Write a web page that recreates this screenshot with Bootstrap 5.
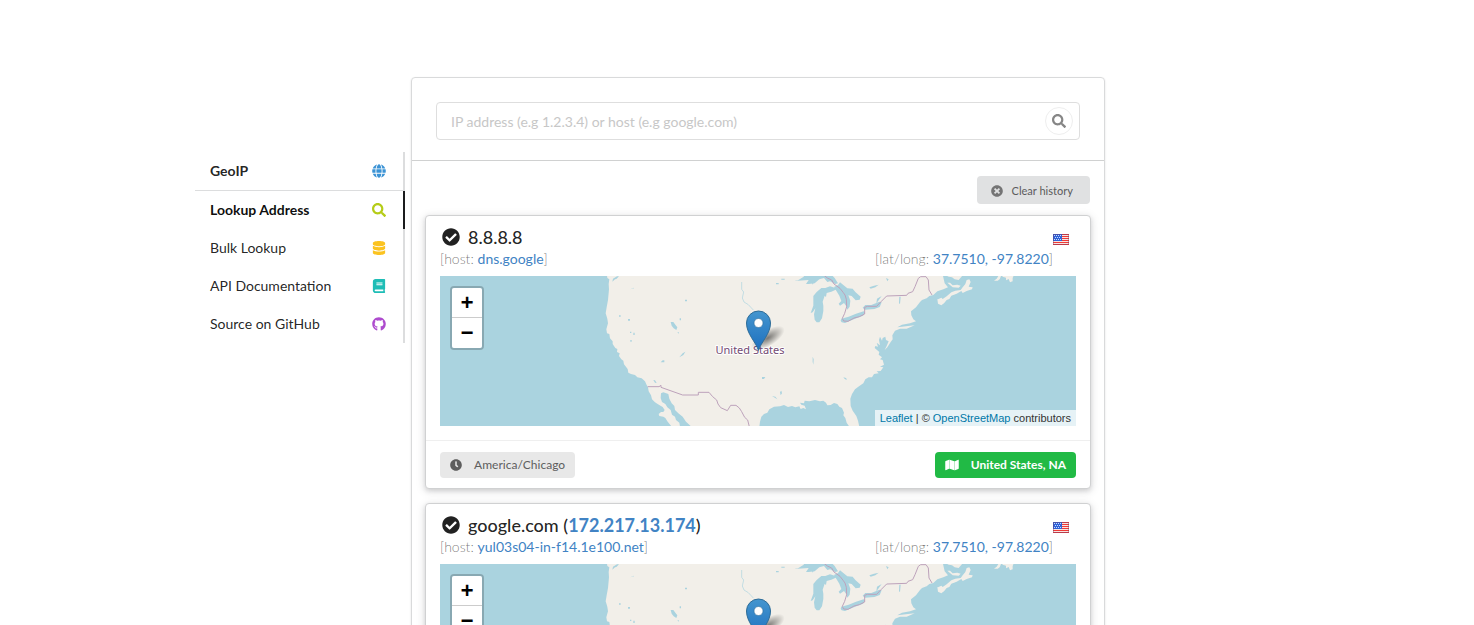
<!DOCTYPE html>
<html lang="en">
<head>
<meta charset="utf-8">
<meta name="viewport" content="width=device-width, initial-scale=1">
<title>GeoIP - Lookup Address</title>
<link href="https://cdn.jsdelivr.net/npm/bootstrap@5.3.0/dist/css/bootstrap.min.css" rel="stylesheet">
<style>
  body { font-family: Lato, "Liberation Sans", sans-serif; font-size: 14px; line-height: 20px; color: rgba(0,0,0,.87); }
  a { color: #4183c4; text-decoration: none; }
  .page { max-width: 1128px; padding: 77px 0 0 22px; gap: 6px; }
  .side { flex: 0 0 210px; margin-top: 75px; }
  .side-item { height: 38px; padding: 0 17px 0 15px; color: rgba(0,0,0,.87); border-right: 2px solid #dcddde; }
  .side-head { height: 39px; border-bottom: 1px solid #dcddde; }
  .side-item.current { border-right-color: #1b1c1d; color: rgba(0,0,0,.95); }
  .ico { width: 14px; height: 14px; fill: currentColor; flex: none; }
  .ico-blue { color: #2185d0; opacity: .88; }
  .ico-olive { color: #b5cc18; }
  .ico-yellow { color: #fbbd08; opacity: .9; }
  .ico-teal { color: #00b5ad; opacity: .88; }
  .ico-purple { color: #a333c8; opacity: .88; }
  .panel { flex: 1 1 0; max-width: 694px; min-width: 0; border: 1px solid #d9dadb; border-radius: 4px; box-shadow: 0 1px 2px rgba(34,36,38,.15); }
  .panel-top { padding: 24px 24px 20px; border-bottom: 1px solid #d0d1d1; }
  .panel-body { padding: 15px 13px 14px; }
  .field { height: 38px; padding: 0 48px 0 14px; font-size: 14px; border: 1px solid #dedede; border-radius: 4px; }
  .field::placeholder { color: #c7c7c7; opacity: 1; }
  .go { width: 28px; height: 28px; right: 7px; top: 5px; padding: 0; border: 1px solid #eee; border-radius: 50%; background: #fff; color: #868686; }
  .clear { height: 28px; margin-right: 1px; padding: 2px 17px 0 14px; gap: 9px; border: 0; border-radius: 4px; background: #e0e1e2; color: rgba(0,0,0,.6); font-size: 11px; font-weight: 500; }
  .clear .ico { width: 12px; height: 12px; opacity: .8; }
  .result { border: 1px solid #d0d1d2; border-radius: 4px; background: #fff; box-shadow: 0 2px 4px rgba(34,36,38,.12), 0 2px 10px rgba(34,36,38,.15); margin-top: 14px; }
  .result:first-of-type { margin-top: 11px; }
  .result-main { padding: 10px 14px 14px; }
  .result-name { font-family: "Lato Medium", Lato, sans-serif; font-size: 18px; line-height: 22px; font-weight: 500; margin: 0; gap: 8px; padding-left: 2px; }
  .result-name .ico { width: 18px; height: 18px; }
  .result-name a { font-family: Lato, sans-serif; font-weight: 700; }
  .soft { color: rgba(0,0,0,.55); font-weight: 300; }
  .soft a { font-weight: 400; }
  .facts { height: 22px; margin: 1px 0 5px; padding-right: 23px; }
  .flag { width: 16px; height: 11px; margin: 4px 7px 0 0; }
  .map { height: 150px; background: #aad3df; overflow: hidden; font-family: "Liberation Sans", Arial, sans-serif; }
  .map-art { width: 100%; height: 150px; display: block; }
  .map-label { font: 11px "Noto Sans", sans-serif; fill: #734a73; stroke: #fff; stroke-width: 2px; paint-order: stroke; stroke-linejoin: round; }
  .zoomer { left: 10px; top: 10px; width: 34px; border: 2px solid rgba(0,0,0,.2); border-radius: 4px; background-clip: padding-box; }
  .zoomer button { display: block; width: 30px; height: 30px; padding: 3px 0 0; border: 0; border-radius: 0 0 2px 2px; background: #fff; color: #000; font: bold 22px/27px "Liberation Mono", monospace; }
  .zoomer button:first-child { border-bottom: 1px solid #ccc; border-radius: 2px 2px 0 0; }
  .credit { right: 0; bottom: 0; height: 16px; padding: 0 5px; background: rgba(255,255,255,.7); color: #333; font-size: 11px; line-height: 16px; }
  .credit a { color: #0078a8; }
  .result-foot { padding: 11px 14px 10px; border-top: 1px solid #efefef; }
  .tag { height: 26px; padding: 0 10px; gap: 12px; border-radius: 4px; font-size: 12px; background: #e8e8e8; color: rgba(0,0,0,.6); font-weight: 500; }
  .tag .ico { width: 12px; height: 12px; }
  .tag-green { background: #21ba45; color: #fff; font-weight: 700; }
  .tag-green .ico { width: 14px; }
</style>
</head>
<body>

<svg class="d-none" xmlns="http://www.w3.org/2000/svg">
  <symbol id="i-globe" viewBox="-8 0 512 512"><path d="M336.5 160C322 70.7 287.8 8 248 8s-74 62.7-88.5 152h177zM152 256c0 22.2 1.2 43.5 3.3 64h185.3c2.1-20.5 3.3-41.8 3.3-64s-1.2-43.5-3.3-64H155.3c-2.1 20.5-3.3 41.8-3.3 64zm324.7-96c-28.6-67.9-86.5-120.4-158-141.6 24.4 33.8 41.2 84.7 50 141.6h108zM177.2 18.4C105.8 39.6 47.8 92.1 19.3 160h108c8.7-56.9 25.5-107.8 49.9-141.6zM487.4 192H372.7c2.1 21 3.3 42.5 3.3 64s-1.2 43-3.3 64h114.6c5.5-20.5 8.6-41.8 8.6-64s-3.1-43.5-8.5-64zM120 256c0-21.5 1.2-43 3.3-64H8.6C3.2 212.5 0 233.8 0 256s3.2 43.5 8.6 64h114.6c-2-21-3.2-42.5-3.2-64zm39.5 96c14.5 89.3 48.7 152 88.5 152s74-62.7 88.5-152h-177zm159.3 141.6c71.4-21.2 129.4-73.7 158-141.6h-108c-8.8 56.9-25.6 107.8-50 141.6zM19.3 352c28.6 67.9 86.5 120.4 158 141.6-24.4-33.8-41.2-84.7-50-141.6h-108z"/></symbol>
  <symbol id="i-search" viewBox="0 0 512 512"><path d="M505 442.7L405.3 343c-4.5-4.5-10.6-7-17-7H372c27.6-35.3 44-79.7 44-128C416 93.1 322.9 0 208 0S0 93.1 0 208s93.1 208 208 208c48.3 0 92.7-16.4 128-44v16.3c0 6.4 2.5 12.5 7 17l99.7 99.7c9.4 9.4 24.6 9.4 33.9 0l28.3-28.3c9.4-9.4 9.4-24.6.1-34zM208 336c-70.7 0-128-57.2-128-128 0-70.7 57.2-128 128-128 70.7 0 128 57.2 128 128 0 70.7-57.2 128-128 128z"/></symbol>
  <symbol id="i-database" viewBox="-32 0 512 512"><path d="M448 73.143v45.714C448 159.143 347.667 192 224 192S0 159.143 0 118.857V73.143C0 32.857 100.333 0 224 0s224 32.857 224 73.143zM448 176v102.857C448 319.143 347.667 352 224 352S0 319.143 0 278.857V176c48.125 33.143 136.208 48.572 224 48.572S399.874 209.143 448 176zm0 160v102.857C448 479.143 347.667 512 224 512S0 479.143 0 438.857V336c48.125 33.143 136.208 48.572 224 48.572S399.874 369.143 448 336z"/></symbol>
  <symbol id="i-book" viewBox="-32 0 512 512"><path d="M448 360V24c0-13.3-10.7-24-24-24H96C43 0 0 43 0 96v320c0 53 43 96 96 96h328c13.3 0 24-10.7 24-24v-16c0-7.5-3.5-14.3-8.9-18.7-4.2-15.4-4.2-59.3 0-74.7 5.4-4.3 8.9-11.1 8.9-18.6zM128 134c0-3.3 2.7-6 6-6h212c3.3 0 6 2.7 6 6v20c0 3.3-2.7 6-6 6H134c-3.3 0-6-2.7-6-6v-20zm0 64c0-3.3 2.7-6 6-6h212c3.3 0 6 2.7 6 6v20c0 3.3-2.7 6-6 6H134c-3.3 0-6-2.7-6-6v-20zm253.4 250H96c-17.7 0-32-14.3-32-32 0-17.6 14.4-32 32-32h285.4c-1.9 17.1-1.9 46.9 0 64z"/></symbol>
  <symbol id="i-github" viewBox="-8 0 512 512"><path d="M244.8 8C106.1 8 0 113.3 0 252c0 110.9 69.8 205.8 169.5 239.2 12.8 2.3 17.3-5.6 17.3-12.1 0-6.2-.3-40.4-.3-61.4 0 0-70 15-84.7-29.8 0 0-11.4-29.1-27.8-36.6 0 0-22.9-15.7 1.6-15.4 0 0 24.9 2 38.6 25.8 21.9 38.6 58.6 27.5 72.9 20.9 2.3-16 8.8-27.1 16-33.7-55.9-6.2-112.3-14.3-112.3-110.5 0-27.5 7.6-41.3 23.6-58.9-2.6-6.5-11.1-33.3 2.6-67.9 20.9-6.5 69 27 69 27 20-5.6 41.5-8.5 62.8-8.5s42.8 2.9 62.8 8.5c0 0 48.1-33.6 69-27 13.7 34.7 5.2 61.4 2.6 67.9 16 17.7 25.8 31.5 25.8 58.9 0 96.5-58.9 104.2-114.8 110.5 9.2 7.9 17 22.9 17 46.4 0 33.7-.3 75.4-.3 83.6 0 6.5 4.6 14.4 17.3 12.1C428.2 457.8 496 362.9 496 252 496 113.3 383.5 8 244.8 8z"/></symbol>
  <symbol id="i-times" viewBox="0 0 512 512"><path d="M256 8C119 8 8 119 8 256s111 248 248 248 248-111 248-248S393 8 256 8zm121.6 313.1c4.7 4.7 4.7 12.3 0 17L338 377.6c-4.7 4.7-12.3 4.7-17 0L256 312l-65.1 65.6c-4.7 4.7-12.3 4.7-17 0L134.4 338c-4.7-4.7-4.7-12.3 0-17l65.6-65-65.6-65.1c-4.7-4.7-4.7-12.3 0-17l39.6-39.6c4.7-4.7 12.3-4.7 17 0l65 65.7 65.1-65.6c4.7-4.7 12.3-4.7 17 0l39.6 39.6c4.7 4.7 4.7 12.3 0 17L312 256l65.6 65.1z"/></symbol>
  <symbol id="i-check" viewBox="0 0 512 512"><path d="M504 256c0 136.967-111.033 248-248 248S8 392.967 8 256 119.033 8 256 8s248 111.033 248 248zM227.314 387.314l184-184c6.248-6.248 6.248-16.379 0-22.627l-22.627-22.627c-6.248-6.249-16.379-6.249-22.628 0L216 308.118l-70.059-70.059c-6.248-6.248-16.379-6.248-22.628 0l-22.627 22.627c-6.248 6.248-6.248 16.379 0 22.627l104 104c6.249 6.249 16.379 6.249 22.628.001z"/></symbol>
  <symbol id="i-clock" viewBox="0 0 512 512"><path d="M256,8C119,8,8,119,8,256S119,504,256,504,504,393,504,256,393,8,256,8Zm92.49,313h0l-20,25a16,16,0,0,1-22.49,2.5h0l-67-49.72a40,40,0,0,1-15-31.23V112a16,16,0,0,1,16-16h32a16,16,0,0,1,16,16V256l58,42.5A16,16,0,0,1,348.49,321Z"/></symbol>
  <symbol id="i-map" viewBox="0 0 576 512"><path d="M0 117.66v346.32c0 11.32 11.43 19.06 21.94 14.86L160 416V32L20.12 87.95A32.006 32.006 0 0 0 0 117.66zM192 416l192 64V96L192 32v384zM554.06 33.16L416 96v384l139.88-55.95A31.996 31.996 0 0 0 576 394.34V48.02c0-11.32-11.43-19.06-21.94-14.86z"/><path fill-opacity=".8" d="M160 32h32v384h-32zM384 96h32v384h-32z"/></symbol>
  <symbol id="i-flag" viewBox="0 0 16 11">
    <path fill="#f6e4e2" d="M0 0h16v11H0z"/>
    <path stroke="#f03a36" d="M0 .5h16M0 2.5h16M0 4.5h16M0 6.5h16M0 8.5h16M0 10.5h16"/>
    <path fill="#2f62d8" d="M0 0h9v7H0z"/>
    <path stroke="#c8dbff" stroke-dasharray="1 1" d="M1 1.5h7M2 3.5h6M1 5.5h7"/>
    <path fill="none" stroke="#6b3c66" stroke-opacity=".4" d="M.5 .5h15v10H.5z"/>
  </symbol>
</svg>

<!-- Gradients are kept in a rendered, zero-sized SVG so that fills can reference them -->
<svg class="position-absolute" width="0" height="0" aria-hidden="true">
  <defs>
    <linearGradient id="pin-fill" x2="0" y2="1"><stop stop-color="#4596cf"/><stop offset="1" stop-color="#1c6fbf"/></linearGradient>
    <radialGradient id="pin-shade"><stop stop-color="#000" stop-opacity=".5"/><stop offset="1" stop-color="#000" stop-opacity="0"/></radialGradient>
    <symbol id="us-map" viewBox="-420 18 1908 450" preserveAspectRatio="xMidYMid slice">
      <path fill="#f2efe9" d="M-2000 18H4000V468H-2000z"/>
      <g fill="#aad3df">
        <path d="M-2000 10H80L82 24 88 28 86 42 87 58 84 90 80 112 77 130 82 146 84 160 79 178 81 190 88 192 90 205 98 214 98 222 106 234 112 237 111 246 119 250 117 258 124 268 130 272 132 283 143 297 145 308 153 312 165 315 172 322 185 325 195 334 200 345 204 352 206 364 213 376 216 388 225 397 234 403 248 411 254 420 250 426 243 426 236 432 238 438 250 440 256 444 262 454 275 470H-2000z"/>
        <path d="M243 370L250 367 265 372 268 386 275 400 283 408 285 420 295 430 308 440 318 455 334 470H300L298 458 288 450 285 440 276 434 272 420 262 412 256 402 246 396 242 384z"/>
        <path d="M272 156l8 0 6 8 6 8-3 8-8-5-6-8zM292 187l5 0-1 4zM117 136h5v4h-5zM144 147h6v5h-6zM160 188h4v7h-4zM150 185h4v4h-4zM151 210h4v5h-4zM315 89h6v5h-6zM299 145h4v6h-4zM220 330l5 1 5 8-5-1zM242 277l6-6h5v6zM298 262l10-12 8-5-6 10zM546 321h10l-4 6h-6zM150 58l12-5v2zM97 35l2-9 12-7 6 0-8 8-4 1z"/>
        <path fill="none" stroke="#aad3df" stroke-width="2" d="M485 36V58L491 66 487 84 492 96 505 104 520 120"/>
        <g transform="translate(540 0)">
          <path d="M-2 470L0 455 4 440 12 432 22 428 28 418 42 410 60 409 72 405 84 411 96 408 106 412 118 409 122 417 130 414 138 418 134 407 124 404 120 398 132 400 134 392 148 394 165 390 180 394 190 392 198 398 202 406 212 405 222 399 232 402 238 410 246 414 252 428 250 436 256 444 260 458 268 470H298L294 452 289 438 278 422 272 408 271 386 276 372 285 358 298 348 310 340 316 328 326 322 336 322 342 312 356 310 350 304 362 303 370 292 360 290 372 284 368 270 360 268 366 262 356 254 358 246 344 234 346 228 354 230 350 218 360 226 357 210 360 200 366 212 368 204 376 200 378 210 386 214 380 228 374 240 382 232 392 216 398 208 397 196 405 182 420 176 440 176 464 166 444 168 412 172 426 164 450 160 468 154 460 148 454 136 453 124 468 112 480 96 486 90 500 85 508 78 520 75 532 64 550 58 564 52 554 40 549 18H2600V470z"/>
          <path d="M102 33l12-2 16-10 4-5h82l8 8 10 16-8 2-16-8-8 2-10-12-14 4-14 12-18 2-8 0 8-12z"/>
          <path d="M160 78l10-12 14-12 12 0 14-5 14 4 10-2-2 6-18 8-14 4-2 12-4-4-6 18 2 12 0 16-4 22-8 12-8 0-6-8-2-16 4-18-8 12-6 2 8-22z"/>
          <path d="M222 51l12-6 6-8 10 8 12 10 16 1 8 10 16 14-3 9-12 2-12-13-10-2 6 16-2 18-7 9-4-12-6-8-12 8-4-6 8-8-6-16z"/>
          <path d="M242 152l2-6 8-2 14-4 22-9 23-7 4 3-6 10-20 8-20 8-14 6-10-2zM308 113l8-8 18 0 24-10 7 2-6 14-16 6-28 2-4-3z"/>
          <path d="M48 39h8v4h-8zM64 26h10v3h-10zM158 34l6 2-8 8zM328 52l14-5 14-3-10 8-14 4zM349 100l2-14 14-8-10 14zM418 80l4 0-2 22-3-2zM378 24l8 4-4 6zM158 260l3 8-1 16-2-8zM36 378l10 2 6 8M60 366l4-4 2 8-4 6zM250 322l8 2 3 5-6-1z"/>
        </g>
      </g>
      <g fill="#f2efe9" transform="translate(930 -150)">
        <path d="M144 238l10-5 4 4 12-8 14-12 12-5 16-2 6-8 8-10 4-12 8-2 4 8-6 14 12 2-2 6-16 5-12 6-4-6-14 8-16 6-6 10-8 3-8 10-8 6-10-5-2-14z"/>
        <path d="M154 160h50l14 6-12 14-12-2-8-6-10-2zM172 188l8 0 8 8 14-2 10 3-6 6-18-1zM312 182l8-6 5-8 8 0-4 10-6 4zM334 164h38l-4 10 0 10-8 3-4-10-8 4 0-8-10-3z"/>
      </g>
      <g fill="none" stroke="#bda2bb" stroke-width="3" stroke-linejoin="round">
        <path d="M203 350H237L243 346V352L308 375H355V367H387L398 380 410 390 414 402 422 413 442 422 452 406H468L478 414 485 425 494 442 503 450 508 470"/>
        <path d="M732 16L742 24 755 30 762 42 780 55 790 68 795 75 799 88 800 110 794 130 787 145 791 153 804 154 822 144 838 140 854 132V112L862 109H890L904 94 920 78 980 76 984 70 998 65 1005 50 1015 25 1022 20H1038L1045 30 1047 60 1056 75"/>
      </g>
    </symbol>
  </defs>
</svg>

<div class="page d-flex align-items-start mx-auto">
  <nav class="side d-flex flex-column" aria-label="Main">
    <div class="side-item side-head d-flex align-items-center justify-content-between fw-bold">GeoIP <svg class="ico ico-blue"><use href="#i-globe"/></svg></div>
    <a class="side-item current d-flex align-items-center justify-content-between fw-bold" href="#" aria-current="page">Lookup Address <svg class="ico ico-olive"><use href="#i-search"/></svg></a>
    <a class="side-item d-flex align-items-center justify-content-between" href="#">Bulk Lookup <svg class="ico ico-yellow"><use href="#i-database"/></svg></a>
    <a class="side-item d-flex align-items-center justify-content-between" href="#">API Documentation <svg class="ico ico-teal"><use href="#i-book"/></svg></a>
    <a class="side-item d-flex align-items-center justify-content-between" href="#">Source on GitHub <svg class="ico ico-purple"><use href="#i-github"/></svg></a>
  </nav>

  <main class="panel">
    <form class="panel-top">
      <div class="position-relative">
        <label class="visually-hidden" for="address">Address</label>
        <input class="field form-control" id="address" type="text" placeholder="IP address (e.g 1.2.3.4) or host (e.g google.com)">
        <button class="go position-absolute d-flex align-items-center justify-content-center" type="button" aria-label="Search"><svg class="ico"><use href="#i-search"/></svg></button>
      </div>
    </form>
    <div class="panel-body">
      <div class="d-flex justify-content-end">
        <button class="clear d-inline-flex align-items-center" type="button"><svg class="ico"><use href="#i-times"/></svg>Clear history</button>
      </div>

      <article class="result">
        <div class="result-main">
          <div class="d-flex justify-content-between">
            <h3 class="result-name d-flex align-items-center"><svg class="ico"><use href="#i-check"/></svg><span>8.8.8.8</span></h3>
            <svg class="flag align-self-center" role="img" aria-label="United States"><use href="#i-flag"/></svg>
          </div>
          <div class="facts d-flex justify-content-between soft">
            <span>[host: <a href="#">dns.google</a>]</span>
            <span>[lat/long: <a href="#">37.7510, -97.8220</a>]</span>
          </div>
          <div class="map position-relative">
            <svg class="map-art"><use href="#us-map" width="100%" height="150"/>
              <svg x="50%" y="0" overflow="visible">
                <text class="map-label" x="-8" y="78" text-anchor="middle">United States</text>
                <ellipse cx="10" cy="62" rx="19" ry="8" transform="rotate(-32 10 62)" fill="url(#pin-shade)"/>
                <path d="M.5 74.500C-2 66-11.500 58-11.500 47a12 12 0 0 1 24 0C12.500 58 3 66 .5 74.500z" fill="url(#pin-fill)" stroke="#2e6c97"/>
                <circle cx=".5" cy="47" r="4.500" fill="#fff" stroke="#2e6c97" stroke-width=".6"/>
              </svg>
            </svg>
            <div class="zoomer position-absolute"><button type="button" aria-label="Zoom in">+</button><button type="button" aria-label="Zoom out">−</button></div>
            <div class="credit position-absolute"><a href="#">Leaflet</a> | © <a href="#">OpenStreetMap</a> contributors</div>
          </div>
        </div>
        <div class="result-foot d-flex justify-content-between">
          <span class="tag d-inline-flex align-items-center"><svg class="ico"><use href="#i-clock"/></svg>America/Chicago</span>
          <span class="tag tag-green d-inline-flex align-items-center"><svg class="ico"><use href="#i-map"/></svg>United States, NA</span>
        </div>
      </article>

      <article class="result">
        <div class="result-main">
          <div class="d-flex justify-content-between">
            <h3 class="result-name d-flex align-items-center"><svg class="ico"><use href="#i-check"/></svg><span>google.com (<a href="#">172.217.13.174</a>)</span></h3>
            <svg class="flag align-self-center" role="img" aria-label="United States"><use href="#i-flag"/></svg>
          </div>
          <div class="facts d-flex justify-content-between soft">
            <span>[host: <a href="#">yul03s04-in-f14.1e100.net</a>]</span>
            <span>[lat/long: <a href="#">37.7510, -97.8220</a>]</span>
          </div>
          <div class="map position-relative">
            <svg class="map-art"><use href="#us-map" width="100%" height="150"/>
              <svg x="50%" y="0" overflow="visible">
                <text class="map-label" x="-8" y="78" text-anchor="middle">United States</text>
                <ellipse cx="10" cy="62" rx="19" ry="8" transform="rotate(-32 10 62)" fill="url(#pin-shade)"/>
                <path d="M.5 74.500C-2 66-11.500 58-11.500 47a12 12 0 0 1 24 0C12.500 58 3 66 .5 74.500z" fill="url(#pin-fill)" stroke="#2e6c97"/>
                <circle cx=".5" cy="47" r="4.500" fill="#fff" stroke="#2e6c97" stroke-width=".6"/>
              </svg>
            </svg>
            <div class="zoomer position-absolute"><button type="button" aria-label="Zoom in">+</button><button type="button" aria-label="Zoom out">−</button></div>
            <div class="credit position-absolute"><a href="#">Leaflet</a> | © <a href="#">OpenStreetMap</a> contributors</div>
          </div>
        </div>
        <div class="result-foot d-flex justify-content-between">
          <span class="tag d-inline-flex align-items-center"><svg class="ico"><use href="#i-clock"/></svg>America/Chicago</span>
          <span class="tag tag-green d-inline-flex align-items-center"><svg class="ico"><use href="#i-map"/></svg>United States, NA</span>
        </div>
      </article>
    </div>
  </main>
</div>
<script src="https://cdn.jsdelivr.net/npm/bootstrap@5.3.0/dist/js/bootstrap.bundle.min.js"></script>
</body>
</html>
